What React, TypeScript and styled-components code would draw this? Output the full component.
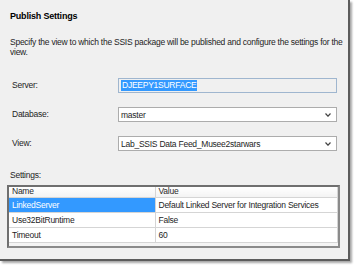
import styled, { createGlobalStyle } from "styled-components";

const Global = createGlobalStyle`
  html, body {
    margin: 0;
    background: #fff;
  }
  * {
    box-sizing: border-box;
  }
`;

const Page = styled.div`
  width: 354px;
  height: 266px;
  background: #fff;
`;

const Panel = styled.div`
  width: 350px;
  height: 261px;
  background: #f0f0f0;
  border-right: 2px solid #5c5c5c;
  border-bottom: 2px solid #5c5c5c;
  box-shadow: 2px 2px 2px rgba(0, 0, 0, 0.35);
  padding: 10px 0 0 10px;
  font-family: "Liberation Sans", Arial, sans-serif;
  font-size: 8.5px;
  letter-spacing: -0.25px;
  color: #1e1e1e;
`;

const Title = styled.h1`
  margin: 0;
  font-size: 9px;
  font-weight: bold;
  color: #000;
  line-height: 12px;
  letter-spacing: -0.2px;
`;

const Description = styled.p`
  margin: 16px 0 0;
  width: 336px;
  line-height: 9.5px;
`;

const Form = styled.div`
  display: grid;
  grid-template-columns: 108px 219px;
  row-gap: 14px;
  margin-top: 21px;
  align-items: center;
`;

const Label = styled.label`
  padding-left: 2px;
  line-height: 15px;
`;

const Box = styled.div<{ $readOnly?: boolean }>`
  height: 15px;
  border: 1px solid ${({ $readOnly }) => ($readOnly ? "#9fb6cf" : "#acacac")};
  background: ${({ $readOnly }) => ($readOnly ? "#f0f0f0" : "#fff")};
  display: flex;
  align-items: center;
  padding: 0 2px;
`;

const Selected = styled.span`
  background: #3399ff;
  color: #fff;
  line-height: 11px;
  padding: 0 1px;
`;

const Value = styled.span`
  flex: 1;
  white-space: nowrap;
`;

const Chevron = styled.svg`
  width: 6px;
  height: 4px;
  margin-right: 3px;
`;

const SettingsLabel = styled.div`
  margin-top: 19px;
  line-height: 10px;
`;

const Grid = styled.div`
  margin: 5px 0 0 -3px;
  width: 333px;
  height: 63px;
  border: 2px solid #6f6f6f;
  border-right-color: #8a8a8a;
  border-bottom-color: #8a8a8a;
  background: #f4f4f4;
`;

const Table = styled.table`
  width: 100%;
  border-collapse: collapse;
  table-layout: fixed;
  font-size: 8.5px;
`;

const Head = styled.th`
  text-align: left;
  font-weight: normal;
  height: 10px;
  line-height: 9px;
  padding: 0 0 0 3px;
  background: linear-gradient(#ffffff, #f3f3f3);
  border-right: 1px solid #d5d5d5;
  border-bottom: 1px solid #d5d5d5;
  color: #2a2a2a;
`;

const Cell = styled.td<{ $active?: boolean }>`
  height: 15px;
  padding: 0 0 0 3px;
  background: ${({ $active }) => ($active ? "#3399ff" : "#fff")};
  color: ${({ $active }) => ($active ? "#fff" : "#1e1e1e")};
  border-right: 1px solid #d5d5d5;
  border-bottom: 1px solid #d5d5d5;
  white-space: nowrap;
  overflow: hidden;
`;

const settings = [
  { name: "LinkedServer", value: "Default Linked Server for Integration Services" },
  { name: "Use32BitRuntime", value: "False" },
  { name: "Timeout", value: "60" },
];

const DropArrow = () => (
  <Chevron viewBox="0 0 6 4">
    <path d="M0.5 0.5 L3 3.2 L5.5 0.5" fill="none" stroke="#444" strokeWidth="1.2" />
  </Chevron>
);

export default function App() {
  return (
    <Page>
      <Global />
      <Panel>
        <Title>Publish Settings</Title>
        <Description>
          Specify the view to which the SSIS package will be published and configure the settings for the
          view.
        </Description>

        <Form>
          <Label>Server:</Label>
          <Box $readOnly>
            <Selected>DJEEPY1SURFACE</Selected>
          </Box>

          <Label>Database:</Label>
          <Box>
            <Value>master</Value>
            <DropArrow />
          </Box>

          <Label>View:</Label>
          <Box>
            <Value>Lab_SSIS Data Feed_Musee2starwars</Value>
            <DropArrow />
          </Box>
        </Form>

        <SettingsLabel>Settings:</SettingsLabel>
        <Grid>
          <Table>
            <colgroup>
              <col style={{ width: 146 }} />
              <col />
            </colgroup>
            <thead>
              <tr>
                <Head>Name</Head>
                <Head>Value</Head>
              </tr>
            </thead>
            <tbody>
              {settings.map((s, i) => (
                <tr key={s.name}>
                  <Cell $active={i === 0}>{s.name}</Cell>
                  <Cell>{s.value}</Cell>
                </tr>
              ))}
            </tbody>
          </Table>
        </Grid>
      </Panel>
    </Page>
  );
}
